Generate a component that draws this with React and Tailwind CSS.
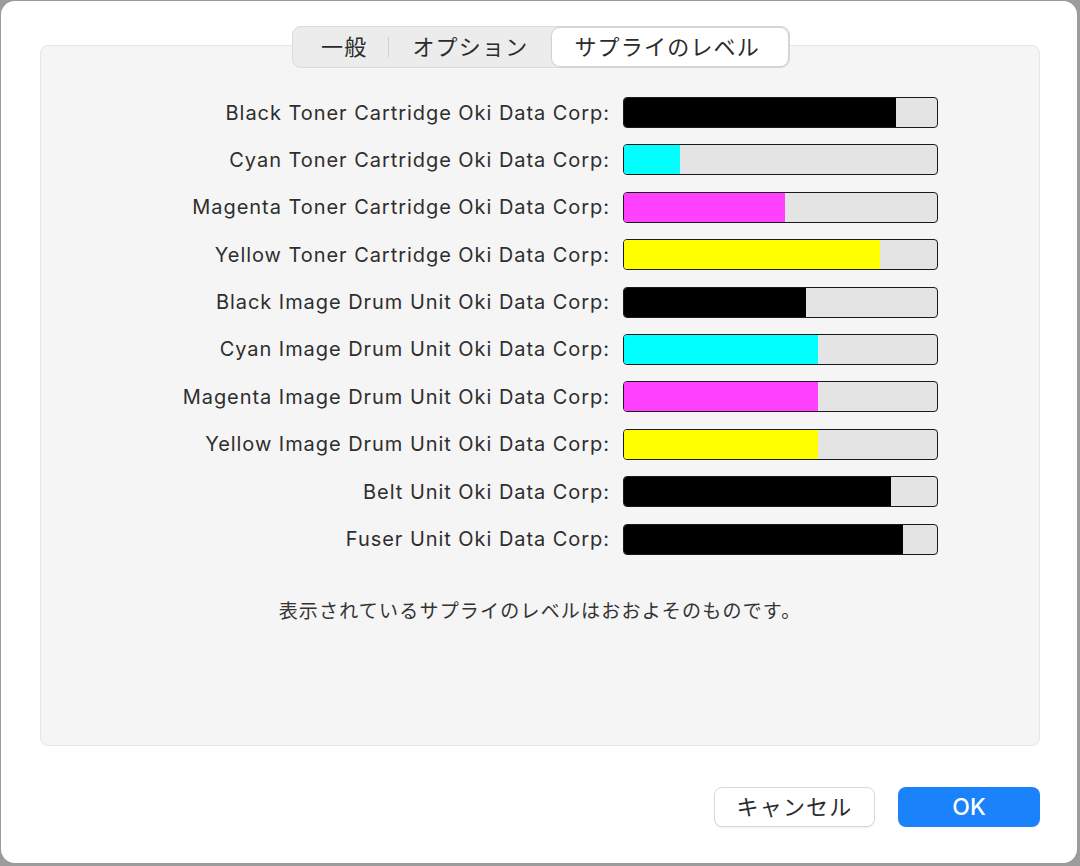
import React, { useState } from 'react';

// Supply levels as fractions of the bar
const supplies = [
  { name: 'Black Toner Cartridge Oki Data Corp:', color: 'bg-black', level: 0.87 },
  { name: 'Cyan Toner Cartridge Oki Data Corp:', color: 'bg-[#00ffff]', level: 0.18 },
  { name: 'Magenta Toner Cartridge Oki Data Corp:', color: 'bg-[#ff40ff]', level: 0.515 },
  { name: 'Yellow Toner Cartridge Oki Data Corp:', color: 'bg-[#ffff00]', level: 0.817 },
  { name: 'Black Image Drum Unit Oki Data Corp:', color: 'bg-black', level: 0.58 },
  { name: 'Cyan Image Drum Unit Oki Data Corp:', color: 'bg-[#00ffff]', level: 0.62 },
  { name: 'Magenta Image Drum Unit Oki Data Corp:', color: 'bg-[#ff40ff]', level: 0.62 },
  { name: 'Yellow Image Drum Unit Oki Data Corp:', color: 'bg-[#ffff00]', level: 0.62 },
  { name: 'Belt Unit Oki Data Corp:', color: 'bg-black', level: 0.852 },
  { name: 'Fuser Unit Oki Data Corp:', color: 'bg-black', level: 0.89 },
];

const tabs = ['一般', 'オプション', 'サプライのレベル'];

const font = { fontFamily: 'Inter, "Noto Sans CJK JP", sans-serif' };

export default function App() {
  const [tab, setTab] = useState(2);

  return (
    <div className="w-[1080px] h-[866px] bg-[#9c9c9c] pl-[1px] pt-[1px] pr-[3px] pb-[3px]" style={font}>
      <div className="w-full h-full bg-white rounded-[14px] flex flex-col pt-[25px] pl-[39px] pr-[37px]">
        {/* Segmented tab control */}
        <div className="flex justify-center relative z-10 pl-[2px]">
          <div className="flex items-center h-[42px] bg-[#ececec] border border-[#dadada] rounded-[9px] p-[1px]">
            {tabs.map((t, i) => (
              <React.Fragment key={t}>
                {i === 1 && <div className="w-px h-[20px] bg-[#cfcfcf]" />}
                <button
                  onClick={() => setTab(i)}
                  className={`h-full text-[22px] tracking-[1.2px] text-[#2b2b2b] rounded-[8px] ${
                    i === 0 ? 'pl-[27px] pr-[21px]' : i === 1 ? 'pl-[23px] pr-[24px]' : 'pl-[22px] pr-[28px]'
                  } ${tab === i ? 'bg-white shadow-[0_0_1px_1px_rgba(0,0,0,0.12)]' : ''}`}
                >
                  {t}
                </button>
              </React.Fragment>
            ))}
          </div>
        </div>

        {/* Content panel */}
        <div className="-mt-[23px] h-[701px] bg-[#f5f5f5] border border-[#e6e6e6] rounded-[8px] flex flex-col pt-[51px]">
          <div className="flex flex-col gap-[16.4px]">
            {supplies.map((s) => (
              <div key={s.name} className="flex items-center h-[31px]">
                <div className="w-[582px] pr-[13px] text-right text-[20px] tracking-[0.95px] text-[#2e2e2e]">
                  {s.name}
                </div>
                <div className="w-[315px] h-[31px] border-[1.5px] border-[#1a1a1a] rounded-[4px] bg-[#e4e4e4] overflow-hidden">
                  <div className={`h-full ${s.color}`} style={{ width: `${s.level * 100}%` }} />
                </div>
              </div>
            ))}
          </div>
          <div className="mt-[43px] text-center text-[19px] tracking-[1.2px] text-[#333]">
            表示されているサプライのレベルはおおよそのものです。
          </div>
        </div>

        {/* Buttons */}
        <div className="flex justify-end gap-[23px] mt-[41px]">
          <button className="w-[161px] h-[40px] bg-white border border-[#d8d8d8] rounded-[8px] shadow-[0_1px_1px_rgba(0,0,0,0.06)] text-[22px] tracking-[1.2px] text-[#2b2b2b]">
            キャンセル
          </button>
          <button className="w-[142px] h-[40px] bg-[#1a82fb] rounded-[8px] text-[23px] text-white font-medium">
            OK
          </button>
        </div>
      </div>
    </div>
  );
}
